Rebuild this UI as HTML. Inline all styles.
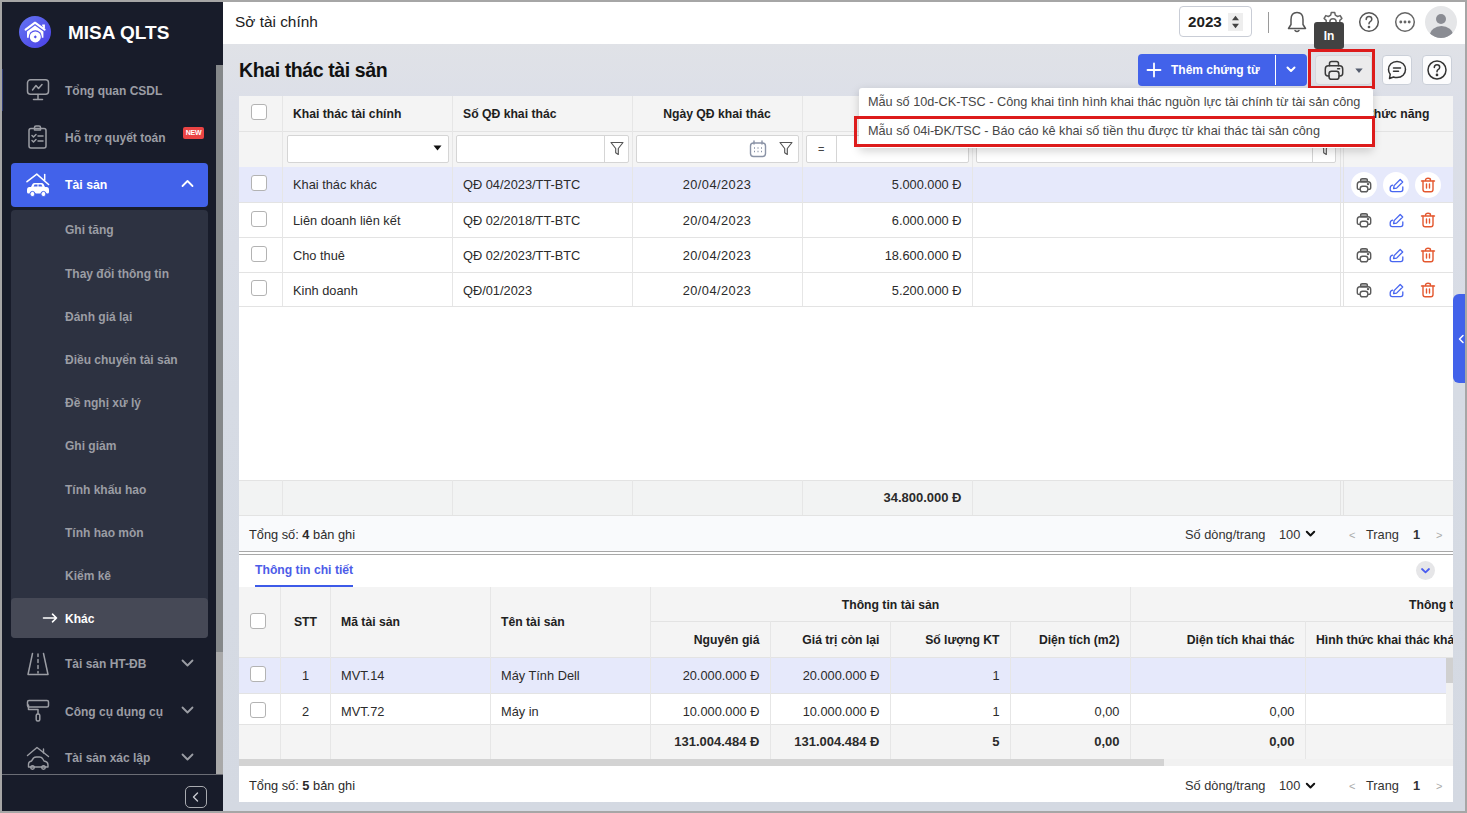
<!DOCTYPE html>
<html><head><meta charset="utf-8">
<style>
*{box-sizing:border-box;margin:0;padding:0}
html,body{width:1467px;height:813px;overflow:hidden;background:#a6a6a6;font-family:"Liberation Sans",sans-serif}
.a{position:absolute}
.t{position:absolute;white-space:nowrap;line-height:1}
b{font-weight:bold}
</style></head><body>
<div class="a" style="left:2px;top:2px;width:221px;height:809px;background:#181c2a;"></div>
<div class="a" style="left:19px;top:16px;width:32px;height:32px;border-radius:50%;background:linear-gradient(135deg,#6475f2,#4a3fe6)"></div>
<svg class="a" style="left:19px;top:16px" width="32" height="32" viewBox="0 0 32 32">
 <path d="M6.6 13.6 L16 6.7 L25.6 13.6" stroke="#fff" stroke-width="2.1" fill="none" stroke-linecap="round" stroke-linejoin="round"/>
 <path d="M23.2 9.3 H25 V12.3" stroke="#fff" stroke-width="1.8" fill="none"/>
 <path d="M8 15.6 L16 9.6 L24.4 15.6 V21.8 H8 Z" fill="#fff"/>
 <circle cx="16.3" cy="20.9" r="6.6" fill="#5350ea"/>
 <circle cx="16.3" cy="20.9" r="5.5" fill="#fff"/>
 <path d="M16.3 19.3 L17.9 20.9 L16.3 22.5 L14.7 20.9 Z" fill="#5350ea"/>
</svg>
<div class="t" style="left:68px;top:23px;font-size:19px;font-weight:bold;color:#fff;">MISA QLTS</div>
<div class="a" style="left:216px;top:65px;width:7px;height:587px;background:#85888a;"></div>
<div class="a" style="left:2px;top:69px;width:1px;height:42px;background:#2e3a72;"></div>
<div class="a" style="left:216px;top:652px;width:7px;height:122px;background:#a9a9a9;"></div>
<svg class="a" style="left:26px;top:78px" width="24" height="24" viewBox="0 0 24 24" fill="none" stroke="#9b9da4" stroke-width="1.5" stroke-linecap="round" stroke-linejoin="round"><rect x="1.5" y="1.8" width="21" height="14.5" rx="3"/><path d="M12 16.5 V21.5 M7.5 21.5 H16.5"/><path d="M6.5 12 L10 7.5 L12.5 10.5 L16 6.5"/></svg>
<div class="t" style="left:65px;top:85px;font-size:12px;font-weight:bold;color:#9b9da4;">Tổng quan CSDL</div>
<svg class="a" style="left:26px;top:125px" width="24" height="24" viewBox="0 0 24 24" fill="none" stroke="#9b9da4" stroke-width="1.5" stroke-linecap="round" stroke-linejoin="round"><rect x="3" y="3.5" width="17" height="19.5" rx="2"/><path d="M8.5 3.5 V2.5 Q8.5 1 10 1 H13 Q14.5 1 14.5 2.5 V3.5 V5 H8.5 Z"/><path d="M6 10.5 L7.5 12 L10 9.5 M12 11 H17 M6 15.5 L7.5 17 L10 14.5 M12 16 H17"/></svg>
<div class="t" style="left:65px;top:132px;font-size:12px;font-weight:bold;color:#9b9da4;">Hỗ trợ quyết toán</div>
<div class="a" style="left:183px;top:127px;width:21px;height:12px;background:#ea4444;border-radius:2px;"></div>
<div class="t" style="left:-6.5px;width:400px;text-align:center;top:129px;font-size:7px;font-weight:bold;color:#fff;letter-spacing:-0.3px;">NEW</div>
<div class="a" style="left:11px;top:163px;width:197px;height:44px;background:#4262ea;border-radius:4px;"></div>
<svg class="a" style="left:26px;top:172px" width="24" height="26" viewBox="0 0 24 26" fill="none" stroke="#fff" stroke-width="1.5" stroke-linecap="round" stroke-linejoin="round"><path d="M1 9.7 L10.8 2.1 L22.6 12.5"/><path d="M18.7 2.6 V8"/><path d="M5 15 L6.5 12 Q7.2 11 8.5 11 H15.5 Q16.8 11 17.5 12 L19 15 H20.5 Q23 15 23 18 V20 Q23 21.5 21.5 21.5 H2.5 Q1 21.5 1 20 V18 Q1 15 3.5 15 Z" fill="#fff" stroke="none"/><path d="M7.6 14.6 L8.6 12.4 H11.5 V14.6 Z M12.5 12.4 H15.4 L16.4 14.6 H12.5 Z" fill="#4262ea" stroke="none"/><circle cx="6.5" cy="22" r="2.6" fill="#fff" stroke="#4262ea" stroke-width="1"/><circle cx="17.5" cy="22" r="2.6" fill="#fff" stroke="#4262ea" stroke-width="1"/></svg>
<div class="t" style="left:65px;top:179px;font-size:12.3px;font-weight:bold;color:#fff;">Tài sản</div>
<svg class="a" style="left:181px;top:179px" width="13" height="9" viewBox="0 0 13 9" fill="none" stroke="#fff" stroke-width="1.8" stroke-linecap="round" stroke-linejoin="round"><path d="M1.5 7 L6.5 2 L11.5 7"/></svg>
<div class="a" style="left:11px;top:210px;width:197px;height:428px;background:#2d3241;border-radius:4px;"></div>
<div class="a" style="left:11px;top:598px;width:197px;height:40px;background:#464956;border-radius:4px;"></div>
<div class="t" style="left:65px;top:224px;font-size:12px;font-weight:bold;color:#9b9da4;">Ghi tăng</div>
<div class="t" style="left:65px;top:268px;font-size:12px;font-weight:bold;color:#9b9da4;">Thay đổi thông tin</div>
<div class="t" style="left:65px;top:311px;font-size:12px;font-weight:bold;color:#9b9da4;">Đánh giá lại</div>
<div class="t" style="left:65px;top:354px;font-size:12px;font-weight:bold;color:#9b9da4;">Điều chuyển tài sản</div>
<div class="t" style="left:65px;top:397px;font-size:12px;font-weight:bold;color:#9b9da4;">Đề nghị xử lý</div>
<div class="t" style="left:65px;top:440px;font-size:12px;font-weight:bold;color:#9b9da4;">Ghi giảm</div>
<div class="t" style="left:65px;top:484px;font-size:12px;font-weight:bold;color:#9b9da4;">Tính khấu hao</div>
<div class="t" style="left:65px;top:527px;font-size:12px;font-weight:bold;color:#9b9da4;">Tính hao mòn</div>
<div class="t" style="left:65px;top:570px;font-size:12px;font-weight:bold;color:#9b9da4;">Kiểm kê</div>
<div class="t" style="left:65px;top:613px;font-size:12px;font-weight:bold;color:#fff;">Khác</div>
<svg class="a" style="left:42px;top:613px" width="16" height="10" viewBox="0 0 16 10" fill="none" stroke="#fff" stroke-width="1.6" stroke-linecap="round" stroke-linejoin="round"><path d="M1.5 5 H14.5 M10.5 1.2 L14.5 5 L10.5 8.8"/></svg>
<svg class="a" style="left:26px;top:652px" width="24" height="24" viewBox="0 0 24 24" fill="none" stroke="#9b9da4" stroke-width="1.5" stroke-linecap="round" stroke-linejoin="round"><path d="M6.5 1.5 L2 22.5 H22 L17.5 1.5"/><path d="M12 2 V4.5 M12 7.5 V10.5 M12 13.5 V16.5 M12 19.5 V21"/></svg>
<div class="t" style="left:65px;top:658px;font-size:12px;font-weight:bold;color:#9b9da4;">Tài sản HT-ĐB</div>
<svg class="a" style="left:181px;top:658px" width="13" height="10" viewBox="0 0 13 10" fill="none" stroke="#9b9da4" stroke-width="1.8" stroke-linecap="round" stroke-linejoin="round"><path d="M1.5 2.5 L6.5 7.5 L11.5 2.5"/></svg>
<svg class="a" style="left:26px;top:699px" width="24" height="24" viewBox="0 0 24 24" fill="none" stroke="#9b9da4" stroke-width="1.5" stroke-linecap="round" stroke-linejoin="round"><rect x="1.5" y="1.5" width="21" height="6.5" rx="1.5"/><path d="M2.5 6 V10.5 H12 V15"/><rect x="10.2" y="15" width="3.6" height="7" rx="1.5"/></svg>
<div class="t" style="left:65px;top:706px;font-size:12px;font-weight:bold;color:#9b9da4;">Công cụ dụng cụ</div>
<svg class="a" style="left:181px;top:705px" width="13" height="10" viewBox="0 0 13 10" fill="none" stroke="#9b9da4" stroke-width="1.8" stroke-linecap="round" stroke-linejoin="round"><path d="M1.5 2.5 L6.5 7.5 L11.5 2.5"/></svg>
<svg class="a" style="left:26px;top:746px" width="24" height="24" viewBox="0 0 24 24" fill="none" stroke="#9b9da4" stroke-width="1.4" stroke-linecap="round" stroke-linejoin="round"><path d="M1.5 9.5 L11 1.5 L22.5 10.5"/><path d="M17.5 3 V7"/><path d="M2.5 18.5 Q2.5 15.5 5.5 15 L7.5 12 Q8.5 11 10.5 11 H13.5 Q15.5 11 16.5 12.5 L18 15 Q22 15.5 22 19 V21 H2.5 Z"/><circle cx="6.5" cy="21.5" r="1.8"/><circle cx="17.5" cy="21.5" r="1.8"/></svg>
<div class="t" style="left:65px;top:752px;font-size:12px;font-weight:bold;color:#9b9da4;">Tài sản xác lập</div>
<svg class="a" style="left:181px;top:752px" width="13" height="10" viewBox="0 0 13 10" fill="none" stroke="#9b9da4" stroke-width="1.8" stroke-linecap="round" stroke-linejoin="round"><path d="M1.5 2.5 L6.5 7.5 L11.5 2.5"/></svg>
<div class="a" style="left:2px;top:774px;width:221px;height:37px;background:#181c2a;border-top:1px solid #6b6d75;"></div>
<div class="a" style="left:185px;top:786px;width:22px;height:22px;background:transparent;border:1.5px solid #a9abb0;border-radius:5px;"></div>
<svg class="a" style="left:185px;top:786px" width="22" height="22" viewBox="0 0 22 22" fill="none" stroke="#c9cbd0" stroke-width="1.4" stroke-linecap="round" stroke-linejoin="round"><path d="M12.5 7 L8.5 11 L12.5 15"/></svg>
<div class="a" style="left:223px;top:2px;width:1242px;height:42px;background:#fff;"></div>
<div class="t" style="left:235px;top:14px;font-size:15.4px;font-weight:normal;color:#212121;">Sở tài chính</div>
<div class="a" style="left:1179px;top:6px;width:73px;height:31px;background:#fff;border:1px solid #c9cdd6;border-radius:4px;"></div>
<div class="t" style="left:1188px;top:14px;font-size:15.2px;font-weight:bold;color:#1f1f1f;">2023</div>
<div class="a" style="left:1228px;top:13px;width:15px;height:18px;background:#eeeeee;"></div>
<svg class="a" style="left:1228px;top:13px" width="15" height="18" viewBox="0 0 15 18"><path d="M4 7.3 L7.5 2.8 L11 7.3 Z M4 10.7 L7.5 15.2 L11 10.7 Z" fill="#444"/></svg>
<div class="a" style="left:1268px;top:12px;width:1px;height:21px;background:#9a9a9a;"></div>
<svg class="a" style="left:1286px;top:11px" width="22" height="22" viewBox="0 0 22 22" fill="none" stroke="#555" stroke-width="1.5" stroke-linecap="round" stroke-linejoin="round"><path d="M11 1.5 C6.5 1.5 5 5 5 8.5 V13.5 L2.5 17.5 H19.5 L17 13.5 V8.5 C17 5 15.5 1.5 11 1.5 Z"/><path d="M9 19.5 Q11 21.5 13 19.5"/></svg>
<svg class="a" style="left:1322px;top:11px" width="22" height="22" viewBox="0 0 22 22" fill="none" stroke="#666" stroke-width="1.5" stroke-linecap="round" stroke-linejoin="round"><path d="M9.3 1.5 H12.7 L13.3 4.2 L15.6 5.5 L18.2 4.6 L19.9 7.5 L17.8 9.4 V12.6 L19.9 14.5 L18.2 17.4 L15.6 16.5 L13.3 17.8 L12.7 20.5 H9.3 L8.7 17.8 L6.4 16.5 L3.8 17.4 L2.1 14.5 L4.2 12.6 V9.4 L2.1 7.5 L3.8 4.6 L6.4 5.5 L8.7 4.2 Z"/><circle cx="11" cy="11" r="3.2"/></svg>
<svg class="a" style="left:1358px;top:11px" width="22" height="22" viewBox="0 0 22 22" fill="none" stroke="#555" stroke-width="1.5" stroke-linecap="round" stroke-linejoin="round"><circle cx="11" cy="11" r="9.3"/><path d="M8.2 8.5 Q8.2 5.6 11 5.6 Q13.8 5.6 13.8 8.2 Q13.8 9.8 12.2 10.6 Q11 11.3 11 12.8"/><circle cx="11" cy="16" r="0.6" fill="#555"/></svg>
<svg class="a" style="left:1394px;top:11px" width="22" height="22" viewBox="0 0 22 22" fill="none" stroke="#666" stroke-width="1.5" stroke-linecap="round" stroke-linejoin="round"><circle cx="11" cy="11" r="9.3"/><circle cx="6.8" cy="11" r="0.7" fill="#666"/><circle cx="11" cy="11" r="0.7" fill="#666"/><circle cx="15.2" cy="11" r="0.7" fill="#666"/></svg>
<div class="a" style="left:1425px;top:6px;width:32px;height:32px;border-radius:50%;background:#e5e6e8;overflow:hidden">
 <div class="a" style="left:11px;top:7.5px;width:10px;height:10px;border-radius:50%;background:#8a8c93"></div>
 <div class="a" style="left:4.5px;top:19.5px;width:23px;height:18px;border-radius:50% 50% 0 0;background:#8a8c93"></div>
</div>
<div class="a" style="left:223px;top:44px;width:1242px;height:767px;background:linear-gradient(180deg,#e0e2e7 0px,#dcdfe8 60px,#d6dbe4 350px,#d4d9e2 767px);"></div>
<div class="t" style="left:239px;top:61px;font-size:19.5px;font-weight:bold;color:#111;letter-spacing:-0.4px;">Khai thác tài sản</div>
<div class="a" style="left:1138px;top:54px;width:169px;height:32px;background:#4262ea;border-radius:4px;"></div>
<div class="a" style="left:1275px;top:55px;width:1px;height:30px;background:#fff;"></div>
<svg class="a" style="left:1146px;top:62px" width="16" height="16" viewBox="0 0 16 16" stroke="#fff" stroke-width="1.8" stroke-linecap="round"><path d="M8 1.5 V14.5 M1.5 8 H14.5"/></svg>
<div class="t" style="left:1171px;top:64px;font-size:12px;font-weight:bold;color:#fff;">Thêm chứng từ</div>
<svg class="a" style="left:1285px;top:65px" width="12" height="9" viewBox="0 0 12 9" fill="none" stroke="#fff" stroke-width="2" stroke-linecap="round" stroke-linejoin="round"><path d="M2.5 2.5 L6 6 L9.5 2.5"/></svg>
<div class="a" style="left:1315px;top:55px;width:57px;height:30px;background:#ebebec;border:1px solid #d6d8dc;border-radius:4px;"></div>
<svg class="a" style="left:1323px;top:60px" width="22" height="22" viewBox="0 0 22 22" fill="none" stroke="#3a3a3a" stroke-width="1.5" stroke-linejoin="round" stroke-linecap="round">
 <path d="M6.5 5.8 V3.6 Q6.5 1.5 8.6 1.5 H13.4 Q15.5 1.5 15.5 3.6 V5.8"/>
 <path d="M6 16 H5 Q2.3 16 2.3 13.3 V9 Q2.3 5.8 5.5 5.8 H16.5 Q19.7 5.8 19.7 9 V13.3 Q19.7 16 17 16 H16"/>
 <rect x="6" y="11.3" width="10" height="8" rx="2.6"/>
 <path d="M14.6 8.8 H16.6"/>
</svg>
<svg class="a" style="left:1354px;top:67px" width="10" height="7" viewBox="0 0 10 7"><path d="M1.3 1.4 H8.7 L5 5.9 Z" fill="#555d6e"/></svg>
<div class="a" style="left:1308px;top:49px;width:67px;height:40px;background:transparent;border:3px solid #dd1b1b;"></div>
<div class="a" style="left:1382px;top:55px;width:30px;height:30px;background:#fcfcfd;border:1px solid #cbd0d9;border-radius:4px;"></div>
<svg class="a" style="left:1386px;top:59px" width="22" height="22" viewBox="0 0 22 22" fill="none" stroke="#333" stroke-width="1.5" stroke-linecap="round" stroke-linejoin="round">
 <path d="M11 2.5 C6 2.5 2.5 6 2.5 10.5 C2.5 12.5 3.2 14 4.2 15.3 L3.5 19.5 L7.5 18 C8.5 18.4 9.7 18.6 11 18.6 C16 18.6 19.5 15 19.5 10.5 C19.5 6 16 2.5 11 2.5 Z"/>
 <path d="M7.5 9 H14.5 M7.5 12.2 H12.5"/>
</svg>
<div class="a" style="left:1422px;top:55px;width:30px;height:30px;background:#fcfcfd;border:1px solid #cbd0d9;border-radius:4px;"></div>
<svg class="a" style="left:1426px;top:59px" width="22" height="22" viewBox="0 0 22 22" fill="none" stroke="#333" stroke-width="1.5" stroke-linecap="round">
 <circle cx="11" cy="11" r="9"/>
 <path d="M8.3 8.6 Q8.3 5.8 11 5.8 Q13.7 5.8 13.7 8.3 Q13.7 9.9 12.1 10.7 Q11 11.3 11 12.8"/>
 <circle cx="11" cy="15.9" r="0.6" fill="#333"/>
</svg>
<div class="a" style="left:239px;top:96px;width:1214px;height:455px;background:#fff;"></div>
<div class="a" style="left:239px;top:96px;width:1214px;height:35px;background:#f4f4f4;"></div>
<div class="a" style="left:239px;top:131px;width:1214px;height:36px;background:#f4f4f4;"></div>
<div class="a" style="left:239px;top:131px;width:1214px;height:1px;background:#e3e3e3;"></div>
<div class="a" style="left:239px;top:167px;width:1214px;height:35px;background:#e6e9fb;"></div>
<div class="a" style="left:239px;top:202px;width:1214px;height:1px;background:#e3e3e3;"></div>
<div class="a" style="left:239px;top:237px;width:1214px;height:1px;background:#e3e3e3;"></div>
<div class="a" style="left:239px;top:272px;width:1214px;height:1px;background:#e3e3e3;"></div>
<div class="a" style="left:239px;top:306px;width:1214px;height:1px;background:#e3e3e3;"></div>
<div class="a" style="left:239px;top:480px;width:1214px;height:36px;background:#f2f3f3;"></div>
<div class="a" style="left:239px;top:480px;width:1214px;height:1px;background:#e3e3e3;"></div>
<div class="a" style="left:239px;top:515px;width:1214px;height:1px;background:#e3e3e3;"></div>
<div class="a" style="left:239px;top:516px;width:1214px;height:35px;background:#f9fafc;"></div>
<div class="a" style="left:282px;top:96px;width:1px;height:210px;background:#e6e6e6;"></div>
<div class="a" style="left:282px;top:480px;width:1px;height:35px;background:#e6e6e6;"></div>
<div class="a" style="left:452px;top:96px;width:1px;height:210px;background:#e6e6e6;"></div>
<div class="a" style="left:452px;top:480px;width:1px;height:35px;background:#e6e6e6;"></div>
<div class="a" style="left:632px;top:96px;width:1px;height:210px;background:#e6e6e6;"></div>
<div class="a" style="left:632px;top:480px;width:1px;height:35px;background:#e6e6e6;"></div>
<div class="a" style="left:802px;top:96px;width:1px;height:210px;background:#e6e6e6;"></div>
<div class="a" style="left:802px;top:480px;width:1px;height:35px;background:#e6e6e6;"></div>
<div class="a" style="left:972px;top:96px;width:1px;height:210px;background:#e6e6e6;"></div>
<div class="a" style="left:972px;top:480px;width:1px;height:35px;background:#e6e6e6;"></div>
<div class="a" style="left:1340px;top:96px;width:1px;height:210px;background:#e3e3e3;"></div>
<div class="a" style="left:1343px;top:96px;width:1px;height:210px;background:#e3e3e3;"></div>
<div class="a" style="left:1340px;top:480px;width:1px;height:35px;background:#e3e3e3;"></div>
<div class="a" style="left:1343px;top:480px;width:1px;height:35px;background:#e3e3e3;"></div>
<div class="a" style="left:251px;top:104px;width:16px;height:16px;border:1px solid #b3b3b3;border-radius:3px;background:#fff"></div>
<div class="t" style="left:293px;top:108px;font-size:12.2px;font-weight:bold;color:#212121;">Khai thác tài chính</div>
<div class="t" style="left:463px;top:108px;font-size:12.2px;font-weight:bold;color:#212121;">Số QĐ khai thác</div>
<div class="t" style="left:517px;width:400px;text-align:center;top:108px;font-size:12.2px;font-weight:bold;color:#212121;">Ngày QĐ khai thác</div>
<div class="t" style="left:1365px;top:108px;font-size:12.2px;font-weight:bold;color:#212121;">Chức năng</div>
<div class="a" style="left:287px;top:135px;width:162px;height:28px;background:#fff;border:1px solid #d5d5d5;border-radius:2px;"></div>
<svg class="a" style="left:433px;top:145px" width="9" height="6" viewBox="0 0 9 6"><path d="M0.5 0.5 H8.5 L4.5 5.5 Z" fill="#111"/></svg>
<div class="a" style="left:456px;top:135px;width:173px;height:28px;background:#fff;border:1px solid #d5d5d5;border-radius:2px;"></div>
<div class="a" style="left:604px;top:136px;width:1px;height:26px;background:#d5d5d5;"></div>
<svg class="a" style="left:610px;top:141px" width="14" height="15" viewBox="0 0 14 15" fill="none" stroke="#555" stroke-width="1.15" stroke-linejoin="round"><path d="M1 1.5 H13 L8.3 7.5 V13.5 L5.7 11.8 V7.5 Z"/></svg>
<div class="a" style="left:636px;top:135px;width:163px;height:28px;background:#fff;border:1px solid #d5d5d5;border-radius:2px;"></div>
<svg class="a" style="left:749px;top:140px" width="18" height="18" viewBox="0 0 18 18" fill="none" stroke="#8a93a6" stroke-width="1.4">
 <rect x="1.5" y="3" width="15" height="13.5" rx="3"/>
 <path d="M5 1 V4 M13 1 V4" stroke-linecap="round"/>
 <path d="M5 8 h1 M8.5 8 h1 M12 8 h1 M5 11.5 h1 M8.5 11.5 h1 M12 11.5 h1" stroke-width="1.5"/>
</svg>
<svg class="a" style="left:779px;top:141px" width="14" height="15" viewBox="0 0 14 15" fill="none" stroke="#555" stroke-width="1.15" stroke-linejoin="round"><path d="M1 1.5 H13 L8.3 7.5 V13.5 L5.7 11.8 V7.5 Z"/></svg>
<div class="a" style="left:806px;top:135px;width:163px;height:28px;background:#fff;border:1px solid #d5d5d5;border-radius:2px;"></div>
<div class="a" style="left:836px;top:136px;width:1px;height:26px;background:#d5d5d5;"></div>
<div class="t" style="left:818px;top:144px;font-size:11px;font-weight:normal;color:#444;">=</div>
<div class="a" style="left:976px;top:135px;width:360px;height:28px;background:#fff;border:1px solid #d5d5d5;border-radius:2px;"></div>
<div class="a" style="left:1312px;top:136px;width:1px;height:26px;background:#d5d5d5;"></div>
<svg class="a" style="left:1318px;top:141px" width="14" height="15" viewBox="0 0 14 15" fill="none" stroke="#555" stroke-width="1.15" stroke-linejoin="round"><path d="M1 1.5 H13 L8.3 7.5 V13.5 L5.7 11.8 V7.5 Z"/></svg>
<div class="a" style="left:251px;top:175px;width:16px;height:16px;border:1px solid #b3b3b3;border-radius:3px;background:#fff"></div>
<div class="t" style="left:293px;top:179px;font-size:12.8px;font-weight:normal;color:#2b2b2b;">Khai thác khác</div>
<div class="t" style="left:463px;top:179px;font-size:12.8px;font-weight:normal;color:#2b2b2b;">QĐ 04/2023/TT-BTC</div>
<div class="t" style="left:517px;width:400px;text-align:center;top:179px;font-size:12.8px;font-weight:normal;color:#2b2b2b;letter-spacing:0.45px;">20/04/2023</div>
<div class="t" style="left:561.5px;width:400px;text-align:right;top:179px;font-size:12.8px;font-weight:normal;color:#2b2b2b;">5.000.000 Đ</div>
<div class="a" style="left:1351px;top:172px;width:26px;height:26px;border-radius:50%;background:#fff"></div>
<div class="a" style="left:1383px;top:172px;width:26px;height:26px;border-radius:50%;background:#fff"></div>
<div class="a" style="left:1415px;top:172px;width:26px;height:26px;border-radius:50%;background:#fff"></div>
<svg class="a" style="left:1356px;top:177px" width="16" height="16" viewBox="0 0 16 16" fill="none" stroke="#5a5a5a" stroke-width="1.4" stroke-linejoin="round">
 <path d="M4.6 4.8 V3.3 Q4.6 1.6 6.5 1.6 H9.5 Q11.4 1.6 11.4 3.3 V4.8 Z" fill="#a5a5a5"/>
 <path d="M4 12.4 H3.3 Q1.3 12.4 1.3 10.4 V7.6 Q1.3 4.8 4 4.8 H12 Q14.7 4.8 14.7 7.6 V10.4 Q14.7 12.4 12.7 12.4 H12"/>
 <rect x="4.2" y="9.2" width="7.6" height="5.6" rx="2.4"/>
 <circle cx="12" cy="7.1" r="0.5" fill="#5a5a5a"/>
</svg>
<svg class="a" style="left:1388px;top:177px" width="16" height="16" viewBox="0 0 16 16" fill="none" stroke="#4866f0" stroke-width="1.3" stroke-linecap="round" stroke-linejoin="round">
 <path d="M5.6 11.6 L6.1 8.6 L12.2 2.5 L14.7 5 L8.6 11.1 Z"/>
 <path d="M4.6 8.2 Q2.2 8.8 2.2 11 V12.6 Q2.2 14.6 4.2 14.6 H12.8 Q14.8 14.6 14.8 12.6 V10"/>
</svg>
<svg class="a" style="left:1420px;top:177px" width="16" height="16" viewBox="0 0 16 16" fill="none" stroke="#e4572e" stroke-width="1.4" stroke-linecap="round" stroke-linejoin="round">
 <path d="M1.5 4 H14.5 M5.5 4 V3 Q5.5 1.3 8 1.3 Q10.5 1.3 10.5 3 V4"/>
 <path d="M3 4 V12.5 Q3 14.7 5.2 14.7 H10.8 Q13 14.7 13 12.5 V4"/>
 <path d="M6.5 7 V11 M9.5 7 V11"/>
</svg>
<div class="a" style="left:251px;top:211px;width:16px;height:16px;border:1px solid #b3b3b3;border-radius:3px;background:#fff"></div>
<div class="t" style="left:293px;top:215px;font-size:12.8px;font-weight:normal;color:#2b2b2b;">Liên doanh liên kết</div>
<div class="t" style="left:463px;top:215px;font-size:12.8px;font-weight:normal;color:#2b2b2b;">QĐ 02/2018/TT-BTC</div>
<div class="t" style="left:517px;width:400px;text-align:center;top:215px;font-size:12.8px;font-weight:normal;color:#2b2b2b;letter-spacing:0.45px;">20/04/2023</div>
<div class="t" style="left:561.5px;width:400px;text-align:right;top:215px;font-size:12.8px;font-weight:normal;color:#2b2b2b;">6.000.000 Đ</div>
<svg class="a" style="left:1356px;top:212px" width="16" height="16" viewBox="0 0 16 16" fill="none" stroke="#5a5a5a" stroke-width="1.4" stroke-linejoin="round">
 <path d="M4.6 4.8 V3.3 Q4.6 1.6 6.5 1.6 H9.5 Q11.4 1.6 11.4 3.3 V4.8 Z" fill="#a5a5a5"/>
 <path d="M4 12.4 H3.3 Q1.3 12.4 1.3 10.4 V7.6 Q1.3 4.8 4 4.8 H12 Q14.7 4.8 14.7 7.6 V10.4 Q14.7 12.4 12.7 12.4 H12"/>
 <rect x="4.2" y="9.2" width="7.6" height="5.6" rx="2.4"/>
 <circle cx="12" cy="7.1" r="0.5" fill="#5a5a5a"/>
</svg>
<svg class="a" style="left:1388px;top:212px" width="16" height="16" viewBox="0 0 16 16" fill="none" stroke="#4866f0" stroke-width="1.3" stroke-linecap="round" stroke-linejoin="round">
 <path d="M5.6 11.6 L6.1 8.6 L12.2 2.5 L14.7 5 L8.6 11.1 Z"/>
 <path d="M4.6 8.2 Q2.2 8.8 2.2 11 V12.6 Q2.2 14.6 4.2 14.6 H12.8 Q14.8 14.6 14.8 12.6 V10"/>
</svg>
<svg class="a" style="left:1420px;top:212px" width="16" height="16" viewBox="0 0 16 16" fill="none" stroke="#e4572e" stroke-width="1.4" stroke-linecap="round" stroke-linejoin="round">
 <path d="M1.5 4 H14.5 M5.5 4 V3 Q5.5 1.3 8 1.3 Q10.5 1.3 10.5 3 V4"/>
 <path d="M3 4 V12.5 Q3 14.7 5.2 14.7 H10.8 Q13 14.7 13 12.5 V4"/>
 <path d="M6.5 7 V11 M9.5 7 V11"/>
</svg>
<div class="a" style="left:251px;top:246px;width:16px;height:16px;border:1px solid #b3b3b3;border-radius:3px;background:#fff"></div>
<div class="t" style="left:293px;top:250px;font-size:12.8px;font-weight:normal;color:#2b2b2b;">Cho thuê</div>
<div class="t" style="left:463px;top:250px;font-size:12.8px;font-weight:normal;color:#2b2b2b;">QĐ 02/2023/TT-BTC</div>
<div class="t" style="left:517px;width:400px;text-align:center;top:250px;font-size:12.8px;font-weight:normal;color:#2b2b2b;letter-spacing:0.45px;">20/04/2023</div>
<div class="t" style="left:561.5px;width:400px;text-align:right;top:250px;font-size:12.8px;font-weight:normal;color:#2b2b2b;">18.600.000 Đ</div>
<svg class="a" style="left:1356px;top:247px" width="16" height="16" viewBox="0 0 16 16" fill="none" stroke="#5a5a5a" stroke-width="1.4" stroke-linejoin="round">
 <path d="M4.6 4.8 V3.3 Q4.6 1.6 6.5 1.6 H9.5 Q11.4 1.6 11.4 3.3 V4.8 Z" fill="#a5a5a5"/>
 <path d="M4 12.4 H3.3 Q1.3 12.4 1.3 10.4 V7.6 Q1.3 4.8 4 4.8 H12 Q14.7 4.8 14.7 7.6 V10.4 Q14.7 12.4 12.7 12.4 H12"/>
 <rect x="4.2" y="9.2" width="7.6" height="5.6" rx="2.4"/>
 <circle cx="12" cy="7.1" r="0.5" fill="#5a5a5a"/>
</svg>
<svg class="a" style="left:1388px;top:247px" width="16" height="16" viewBox="0 0 16 16" fill="none" stroke="#4866f0" stroke-width="1.3" stroke-linecap="round" stroke-linejoin="round">
 <path d="M5.6 11.6 L6.1 8.6 L12.2 2.5 L14.7 5 L8.6 11.1 Z"/>
 <path d="M4.6 8.2 Q2.2 8.8 2.2 11 V12.6 Q2.2 14.6 4.2 14.6 H12.8 Q14.8 14.6 14.8 12.6 V10"/>
</svg>
<svg class="a" style="left:1420px;top:247px" width="16" height="16" viewBox="0 0 16 16" fill="none" stroke="#e4572e" stroke-width="1.4" stroke-linecap="round" stroke-linejoin="round">
 <path d="M1.5 4 H14.5 M5.5 4 V3 Q5.5 1.3 8 1.3 Q10.5 1.3 10.5 3 V4"/>
 <path d="M3 4 V12.5 Q3 14.7 5.2 14.7 H10.8 Q13 14.7 13 12.5 V4"/>
 <path d="M6.5 7 V11 M9.5 7 V11"/>
</svg>
<div class="a" style="left:251px;top:280px;width:16px;height:16px;border:1px solid #b3b3b3;border-radius:3px;background:#fff"></div>
<div class="t" style="left:293px;top:285px;font-size:12.8px;font-weight:normal;color:#2b2b2b;">Kinh doanh</div>
<div class="t" style="left:463px;top:285px;font-size:12.8px;font-weight:normal;color:#2b2b2b;">QĐ/01/2023</div>
<div class="t" style="left:517px;width:400px;text-align:center;top:285px;font-size:12.8px;font-weight:normal;color:#2b2b2b;letter-spacing:0.45px;">20/04/2023</div>
<div class="t" style="left:561.5px;width:400px;text-align:right;top:285px;font-size:12.8px;font-weight:normal;color:#2b2b2b;">5.200.000 Đ</div>
<svg class="a" style="left:1356px;top:282px" width="16" height="16" viewBox="0 0 16 16" fill="none" stroke="#5a5a5a" stroke-width="1.4" stroke-linejoin="round">
 <path d="M4.6 4.8 V3.3 Q4.6 1.6 6.5 1.6 H9.5 Q11.4 1.6 11.4 3.3 V4.8 Z" fill="#a5a5a5"/>
 <path d="M4 12.4 H3.3 Q1.3 12.4 1.3 10.4 V7.6 Q1.3 4.8 4 4.8 H12 Q14.7 4.8 14.7 7.6 V10.4 Q14.7 12.4 12.7 12.4 H12"/>
 <rect x="4.2" y="9.2" width="7.6" height="5.6" rx="2.4"/>
 <circle cx="12" cy="7.1" r="0.5" fill="#5a5a5a"/>
</svg>
<svg class="a" style="left:1388px;top:282px" width="16" height="16" viewBox="0 0 16 16" fill="none" stroke="#4866f0" stroke-width="1.3" stroke-linecap="round" stroke-linejoin="round">
 <path d="M5.6 11.6 L6.1 8.6 L12.2 2.5 L14.7 5 L8.6 11.1 Z"/>
 <path d="M4.6 8.2 Q2.2 8.8 2.2 11 V12.6 Q2.2 14.6 4.2 14.6 H12.8 Q14.8 14.6 14.8 12.6 V10"/>
</svg>
<svg class="a" style="left:1420px;top:282px" width="16" height="16" viewBox="0 0 16 16" fill="none" stroke="#e4572e" stroke-width="1.4" stroke-linecap="round" stroke-linejoin="round">
 <path d="M1.5 4 H14.5 M5.5 4 V3 Q5.5 1.3 8 1.3 Q10.5 1.3 10.5 3 V4"/>
 <path d="M3 4 V12.5 Q3 14.7 5.2 14.7 H10.8 Q13 14.7 13 12.5 V4"/>
 <path d="M6.5 7 V11 M9.5 7 V11"/>
</svg>
<div class="t" style="left:561.5px;width:400px;text-align:right;top:491px;font-size:13px;font-weight:bold;color:#2b2b2b;">34.800.000 Đ</div>
<div class="t" style="left:249px;top:529px;font-size:12.8px;font-weight:normal;color:#2b2b2b;">Tổng số: <b>4</b> bản ghi</div>
<div class="t" style="left:1185px;top:529px;font-size:12.8px;font-weight:normal;color:#333;">Số dòng/trang</div>
<div class="t" style="left:1279px;top:529px;font-size:12.8px;font-weight:normal;color:#333;">100</div>
<svg class="a" style="left:1305px;top:530px" width="11" height="8" viewBox="0 0 11 8" fill="none" stroke="#111" stroke-width="2" stroke-linecap="round" stroke-linejoin="round"><path d="M1.8 1.8 L5.5 5.5 L9.2 1.8"/></svg>
<div class="t" style="left:1349px;top:530px;font-size:11px;font-weight:normal;color:#aaa;">&lt;</div>
<div class="t" style="left:1366px;top:529px;font-size:12.8px;font-weight:normal;color:#333;">Trang</div>
<div class="t" style="left:1413px;top:529px;font-size:12.8px;font-weight:bold;color:#333;">1</div>
<div class="t" style="left:1436px;top:530px;font-size:11px;font-weight:normal;color:#aaa;">&gt;</div>
<div class="a" style="left:239px;top:551px;width:1214px;height:1px;background:#a8a8a8;"></div>
<div class="a" style="left:239px;top:552px;width:1214px;height:2px;background:#fff;"></div>
<div class="a" style="left:239px;top:554px;width:1214px;height:1px;background:#a8a8a8;"></div>
<div class="a" style="left:1453px;top:294px;width:12px;height:89px;background:#4262ea;border-radius:6px 0 0 6px;"></div>
<svg class="a" style="left:1457px;top:334px" width="8" height="10" viewBox="0 0 8 10" fill="none" stroke="#fff" stroke-width="1.5" stroke-linecap="round" stroke-linejoin="round"><path d="M6 1.5 L2.5 5 L6 8.5"/></svg>
<div class="a" style="left:239px;top:555px;width:1214px;height:247px;background:#fff;"></div>
<div class="t" style="left:255px;top:564px;font-size:12.2px;font-weight:bold;color:#4d5ce8;">Thông tin chi tiết</div>
<div class="a" style="left:255px;top:585px;width:98px;height:2px;background:#3d5ae8;"></div>
<div class="a" style="left:1416px;top:561px;width:19px;height:19px;background:#e6e6e8;border-radius:50%;"></div>
<svg class="a" style="left:1420px;top:566px" width="11" height="9" viewBox="0 0 11 9" fill="none" stroke="#4a5cf0" stroke-width="1.8" stroke-linecap="round" stroke-linejoin="round"><path d="M2 3 L5.5 6.3 L9 3"/></svg>
<div class="a" style="left:239px;top:587px;width:1214px;height:70px;background:#f4f4f4;"></div>
<div class="a" style="left:651px;top:621px;width:802px;height:1px;background:#e3e3e3;"></div>
<div class="a" style="left:239px;top:657px;width:1214px;height:1px;background:#e3e3e3;"></div>
<div class="a" style="left:239px;top:658px;width:1207px;height:36px;background:#e6e9fb;"></div>
<div class="a" style="left:239px;top:693px;width:1207px;height:1px;background:#e3e3e3;"></div>
<div class="a" style="left:239px;top:724px;width:1214px;height:35px;background:#f4f4f4;"></div>
<div class="a" style="left:239px;top:724px;width:1214px;height:1px;background:#e3e3e3;"></div>
<div class="a" style="left:239px;top:759px;width:1214px;height:7px;background:#f1f1f1;"></div>
<div class="a" style="left:239px;top:759px;width:925px;height:7px;background:#d3d3d3;"></div>
<div class="a" style="left:1446px;top:658px;width:7px;height:66px;background:#f1f1f1;"></div>
<div class="a" style="left:1446px;top:658px;width:7px;height:25px;background:#d0d0d0;"></div>
<div class="a" style="left:280px;top:587px;width:1px;height:172px;background:#e6e6e6;"></div>
<div class="a" style="left:330px;top:587px;width:1px;height:172px;background:#e6e6e6;"></div>
<div class="a" style="left:490px;top:587px;width:1px;height:172px;background:#e6e6e6;"></div>
<div class="a" style="left:650px;top:587px;width:1px;height:172px;background:#e6e6e6;"></div>
<div class="a" style="left:1130px;top:587px;width:1px;height:172px;background:#e6e6e6;"></div>
<div class="a" style="left:770px;top:621px;width:1px;height:138px;background:#e6e6e6;"></div>
<div class="a" style="left:890px;top:621px;width:1px;height:138px;background:#e6e6e6;"></div>
<div class="a" style="left:1010px;top:621px;width:1px;height:138px;background:#e6e6e6;"></div>
<div class="a" style="left:1305px;top:621px;width:1px;height:138px;background:#e6e6e6;"></div>
<div class="a" style="left:250px;top:613px;width:16px;height:16px;border:1px solid #b3b3b3;border-radius:3px;background:#fff"></div>
<div class="t" style="left:105.5px;width:400px;text-align:center;top:616px;font-size:12.2px;font-weight:bold;color:#212121;">STT</div>
<div class="t" style="left:341px;top:616px;font-size:12.2px;font-weight:bold;color:#212121;">Mã tài sản</div>
<div class="t" style="left:501px;top:616px;font-size:12.2px;font-weight:bold;color:#212121;">Tên tài sản</div>
<div class="t" style="left:690.5px;width:400px;text-align:center;top:599px;font-size:12.2px;font-weight:bold;color:#212121;">Thông tin tài sản</div>
<div class="t" style="left:359.5px;width:400px;text-align:right;top:634px;font-size:12.2px;font-weight:bold;color:#212121;">Nguyên giá</div>
<div class="t" style="left:479.5px;width:400px;text-align:right;top:634px;font-size:12.2px;font-weight:bold;color:#212121;">Giá trị còn lại</div>
<div class="t" style="left:599.5px;width:400px;text-align:right;top:634px;font-size:12.2px;font-weight:bold;color:#212121;">Số lượng KT</div>
<div class="t" style="left:719.5px;width:400px;text-align:right;top:634px;font-size:12.2px;font-weight:bold;color:#212121;">Diện tích (m2)</div>
<div class="t" style="left:894.5px;width:400px;text-align:right;top:634px;font-size:12.2px;font-weight:bold;color:#212121;">Diện tích khai thác</div>
<div class="a" style="left:1131px;top:588px;width:322px;height:68px;overflow:hidden"><div class="t" style="left:278px;top:11px;font-size:12.2px;font-weight:bold;color:#212121;">Thông tin</div>
<div class="t" style="left:185px;top:46px;font-size:12.2px;font-weight:bold;color:#212121;">Hình thức khai thác khác</div>
</div>
<div class="a" style="left:250px;top:666px;width:16px;height:16px;border:1px solid #b3b3b3;border-radius:3px;background:#fff"></div>
<div class="t" style="left:105.5px;width:400px;text-align:center;top:670px;font-size:12.8px;font-weight:normal;color:#2b2b2b;">1</div>
<div class="t" style="left:341px;top:670px;font-size:12.8px;font-weight:normal;color:#2b2b2b;">MVT.14</div>
<div class="t" style="left:501px;top:670px;font-size:12.8px;font-weight:normal;color:#2b2b2b;">Máy Tính Dell</div>
<div class="t" style="left:359.5px;width:400px;text-align:right;top:670px;font-size:12.8px;font-weight:normal;color:#2b2b2b;">20.000.000 Đ</div>
<div class="t" style="left:479.5px;width:400px;text-align:right;top:670px;font-size:12.8px;font-weight:normal;color:#2b2b2b;">20.000.000 Đ</div>
<div class="t" style="left:599.5px;width:400px;text-align:right;top:670px;font-size:12.8px;font-weight:normal;color:#2b2b2b;">1</div>
<div class="t" style="left:719.5px;width:400px;text-align:right;top:670px;font-size:12.8px;font-weight:normal;color:#2b2b2b;"></div>
<div class="t" style="left:894.5px;width:400px;text-align:right;top:670px;font-size:12.8px;font-weight:normal;color:#2b2b2b;"></div>
<div class="a" style="left:250px;top:702px;width:16px;height:16px;border:1px solid #b3b3b3;border-radius:3px;background:#fff"></div>
<div class="t" style="left:105.5px;width:400px;text-align:center;top:706px;font-size:12.8px;font-weight:normal;color:#2b2b2b;">2</div>
<div class="t" style="left:341px;top:706px;font-size:12.8px;font-weight:normal;color:#2b2b2b;">MVT.72</div>
<div class="t" style="left:501px;top:706px;font-size:12.8px;font-weight:normal;color:#2b2b2b;">Máy in</div>
<div class="t" style="left:359.5px;width:400px;text-align:right;top:706px;font-size:12.8px;font-weight:normal;color:#2b2b2b;">10.000.000 Đ</div>
<div class="t" style="left:479.5px;width:400px;text-align:right;top:706px;font-size:12.8px;font-weight:normal;color:#2b2b2b;">10.000.000 Đ</div>
<div class="t" style="left:599.5px;width:400px;text-align:right;top:706px;font-size:12.8px;font-weight:normal;color:#2b2b2b;">1</div>
<div class="t" style="left:719.5px;width:400px;text-align:right;top:706px;font-size:12.8px;font-weight:normal;color:#2b2b2b;">0,00</div>
<div class="t" style="left:894.5px;width:400px;text-align:right;top:706px;font-size:12.8px;font-weight:normal;color:#2b2b2b;">0,00</div>
<div class="t" style="left:359.5px;width:400px;text-align:right;top:735px;font-size:13px;font-weight:bold;color:#2b2b2b;">131.004.484 Đ</div>
<div class="t" style="left:479.5px;width:400px;text-align:right;top:735px;font-size:13px;font-weight:bold;color:#2b2b2b;">131.004.484 Đ</div>
<div class="t" style="left:599.5px;width:400px;text-align:right;top:735px;font-size:13px;font-weight:bold;color:#2b2b2b;">5</div>
<div class="t" style="left:719.5px;width:400px;text-align:right;top:735px;font-size:13px;font-weight:bold;color:#2b2b2b;">0,00</div>
<div class="t" style="left:894.5px;width:400px;text-align:right;top:735px;font-size:13px;font-weight:bold;color:#2b2b2b;">0,00</div>
<div class="t" style="left:249px;top:780px;font-size:12.8px;font-weight:normal;color:#2b2b2b;">Tổng số: <b>5</b> bản ghi</div>
<div class="t" style="left:1185px;top:780px;font-size:12.8px;font-weight:normal;color:#333;">Số dòng/trang</div>
<div class="t" style="left:1279px;top:780px;font-size:12.8px;font-weight:normal;color:#333;">100</div>
<svg class="a" style="left:1305px;top:781.5px" width="11" height="8" viewBox="0 0 11 8" fill="none" stroke="#111" stroke-width="2" stroke-linecap="round" stroke-linejoin="round"><path d="M1.8 1.8 L5.5 5.5 L9.2 1.8"/></svg>
<div class="t" style="left:1349px;top:781px;font-size:11px;font-weight:normal;color:#aaa;">&lt;</div>
<div class="t" style="left:1366px;top:780px;font-size:12.8px;font-weight:normal;color:#333;">Trang</div>
<div class="t" style="left:1413px;top:780px;font-size:12.8px;font-weight:bold;color:#333;">1</div>
<div class="t" style="left:1436px;top:781px;font-size:11px;font-weight:normal;color:#aaa;">&gt;</div>
<div class="a" style="left:859px;top:88px;width:514px;height:60px;background:#fff;border-radius:3px;box-shadow:0 3px 10px rgba(0,0,0,0.18);"></div>
<div class="t" style="left:868px;top:96px;font-size:12.7px;font-weight:normal;color:#474747;">Mẫu số 10d-CK-TSC - Công khai tình hình khai thác nguồn lực tài chính từ tài sản công</div>
<div class="t" style="left:868px;top:125px;font-size:12.7px;font-weight:normal;color:#474747;">Mẫu số 04i-ĐK/TSC - Báo cáo kê khai số tiền thu được từ khai thác tài sản công</div>
<div class="a" style="left:854px;top:116px;width:521px;height:31px;background:transparent;border:3px solid #dd1b1b;"></div>
<div class="a" style="left:1314px;top:22px;width:30px;height:27px;background:#424242;border-radius:3px;"></div>
<div class="t" style="left:1129px;width:400px;text-align:center;top:30px;font-size:12px;font-weight:bold;color:#fff;">In</div>
</body></html>
